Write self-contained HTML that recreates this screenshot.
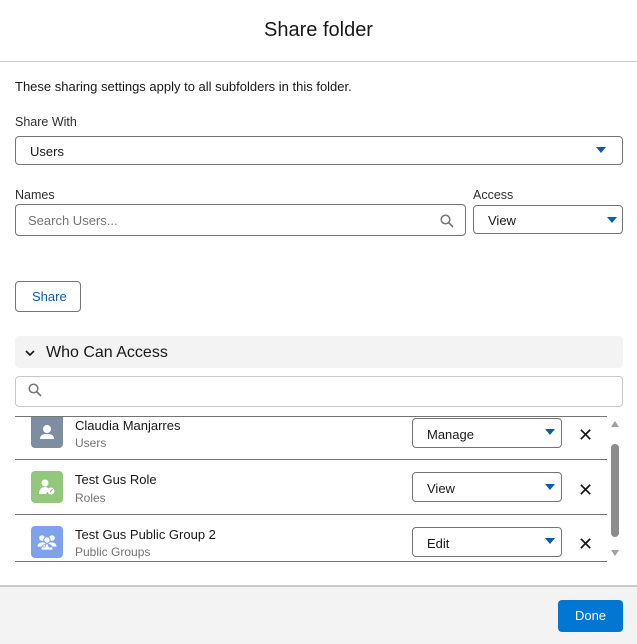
<!DOCTYPE html>
<html><head><style>
*{box-sizing:border-box;margin:0;padding:0}
body{width:637px;height:644px;background:#fff;font-family:"Liberation Sans",sans-serif;color:#181818;position:relative;overflow:hidden;font-size:13px}
.a{position:absolute}
.box{position:absolute;border:1px solid #747474;border-radius:4px;background:#fff}
.tri{position:absolute;width:0;height:0;border-left:5px solid transparent;border-right:5px solid transparent;border-top:6px solid #0b5cab}
.lbl{position:absolute;font-size:12.5px;color:#2e2e2e}
.line{position:absolute;left:15px;width:592px;height:1px;background:#747474}
.ic{position:absolute;left:31px;width:32px;height:32px;border-radius:4px}
.nm{position:absolute;left:75px;font-size:13px;color:#181818}
.sb{position:absolute;left:75px;font-size:12px;color:#747474}
.x{position:absolute;left:578px;font-size:18px;color:#181818}
</style></head><body>
<div class="a" style="left:0;top:0;width:637px;height:62px;border-bottom:1px solid #c9c9c9"></div>
<div class="a" style="left:0;top:19px;width:637px;text-align:center;font-size:20px;color:#181818">Share folder</div>
<div class="a" style="left:15px;top:79px;font-size:13px">These sharing settings apply to all subfolders in this folder.</div>
<div class="lbl" style="left:15px;top:115px">Share With</div>
<div class="box" style="left:15px;top:136px;width:608px;height:29px"></div>
<div class="a" style="left:30px;top:144px">Users</div>
<div class="tri" style="left:596px;top:147px"></div>
<div class="lbl" style="left:15px;top:188px">Names</div>
<div class="box" style="left:15px;top:204px;width:451px;height:32px"></div>
<div class="a" style="left:28px;top:213px;color:#747474">Search Users...</div>
<svg class="a" style="left:440px;top:214px" width="14" height="14" viewBox="0 0 14 14"><circle cx="5.5" cy="5.5" r="4.3" fill="none" stroke="#747474" stroke-width="1.5"/><line x1="8.7" y1="8.7" x2="13" y2="13" stroke="#747474" stroke-width="1.6"/></svg>
<div class="lbl" style="left:473px;top:188px">Access</div>
<div class="box" style="left:473px;top:205px;width:150px;height:29px"></div>
<div class="a" style="left:488px;top:213px">View</div>
<div class="tri" style="left:607px;top:217px"></div>
<div class="box" style="left:15px;top:281px;width:66px;height:31px"></div>
<div class="a" style="left:32px;top:289px;color:#0b5cab">Share</div>
<div class="a" style="left:15px;top:336px;width:608px;height:32px;background:#f3f3f3;border-radius:4px"></div>
<svg class="a" style="left:24px;top:349px" width="12" height="8" viewBox="0 0 12 8"><path d="M2 2l4 4 4-4" fill="none" stroke="#181818" stroke-width="1.6"/></svg>
<div class="a" style="left:46px;top:344px;font-size:16px">Who Can Access</div>
<div class="box" style="left:15px;top:376px;width:608px;height:31px;border-color:#c9c9c9"></div>
<svg class="a" style="left:28px;top:383px" width="14" height="14" viewBox="0 0 14 14"><circle cx="5.5" cy="5.5" r="4.3" fill="none" stroke="#747474" stroke-width="1.5"/><line x1="8.7" y1="8.7" x2="13" y2="13" stroke="#747474" stroke-width="1.6"/></svg>
<div class="line" style="top:416px"></div>
<div class="line" style="top:459px"></div>
<div class="line" style="top:514px"></div>
<div class="line" style="top:561px"></div>
<div class="ic" style="top:417px;height:31px;background:#7f8da1;border-radius:0 0 4px 4px"></div>
<svg class="a" style="left:37px;top:422px" width="20" height="20" viewBox="0 0 20 20"><circle cx="10" cy="7" r="4" fill="#fff"/><path d="M3 17c0-4 3-5 7-5s7 1 7 5z" fill="#fff"/></svg>
<div class="nm" style="top:418px">Claudia Manjarres</div>
<div class="sb" style="top:436px">Users</div>
<div class="ic" style="top:471px;background:#91c87b"></div>
<svg class="a" style="left:37px;top:477px" width="20" height="20" viewBox="0 0 20 20"><circle cx="8" cy="6" r="3.5" fill="#fff"/><path d="M2 17c0-5 3-7 6-7 2 0 3 1 4 2l-3 5z" fill="#fff"/><circle cx="14" cy="14" r="3.5" fill="#fff"/><line x1="13" y1="15" x2="15.5" y2="12.5" stroke="#91c87b" stroke-width="1.2"/></svg>
<div class="nm" style="top:472px">Test Gus Role</div>
<div class="sb" style="top:491px">Roles</div>
<div class="ic" style="top:526px;background:#7ea3ec"></div>
<svg class="a" style="left:36px;top:532px" width="22" height="20" viewBox="0 0 22 20"><circle cx="6" cy="6" r="2.8" fill="#fff"/><circle cx="16" cy="6" r="2.8" fill="#fff"/><circle cx="11" cy="8" r="3.2" fill="#fff" stroke="#7ea3ec"/><path d="M1 15c0-3 2-5 5-5s4 1 4 2l-1 3z M21 15c0-3-2-5-5-5s-4 1-4 2l1 3z M5 18c0-4 3-6 6-6s6 2 6 6z" fill="#fff" stroke="#7ea3ec" stroke-width=".8"/></svg>
<div class="nm" style="top:527px">Test Gus Public Group 2</div>
<div class="sb" style="top:545px">Public Groups</div>
<div class="box" style="left:412px;top:418px;width:150px;height:30px"></div>
<div class="a" style="left:427px;top:427px">Manage</div>
<div class="tri" style="left:545px;top:429px"></div>
<div class="box" style="left:412px;top:472px;width:150px;height:30px"></div>
<div class="a" style="left:427px;top:481px">View</div>
<div class="tri" style="left:545px;top:484px"></div>
<div class="box" style="left:412px;top:527px;width:150px;height:30px"></div>
<div class="a" style="left:427px;top:536px">Edit</div>
<div class="tri" style="left:545px;top:538px"></div>
<div class="x" style="top:425px">✕</div>
<div class="x" style="top:480px">✕</div>
<div class="x" style="top:534px">✕</div>
<div class="a" style="left:611px;top:421px;width:0;height:0;border-left:4px solid transparent;border-right:4px solid transparent;border-bottom:6px solid #a0a0a0"></div>
<div class="a" style="left:611px;top:444px;width:8px;height:93px;background:#8c8c8c;border-radius:4px"></div>
<div class="a" style="left:611px;top:550px;width:0;height:0;border-left:4px solid transparent;border-right:4px solid transparent;border-top:6px solid #a0a0a0"></div>
<div class="a" style="left:0;top:585px;width:637px;height:59px;background:#f3f3f3;border-top:2px solid #c9c9c9"></div>
<div class="a" style="left:558px;top:600px;width:65px;height:32px;background:#0176d3;border-radius:4px;color:#fff;text-align:center;line-height:32px">Done</div>
</body></html>
